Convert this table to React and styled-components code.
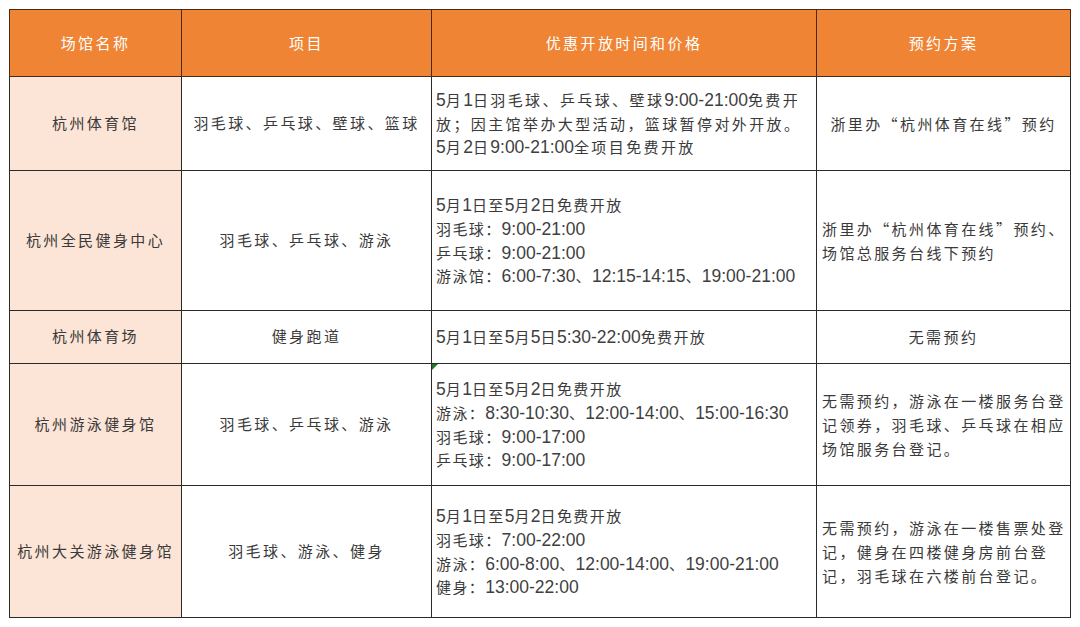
import styled, { createGlobalStyle } from "styled-components";

const COLOR = {
  header: "#EE8434",
  name: "#FCE4D6",
  border: "#2a2a2a",
  text: "#3a3a3a",
};

const GlobalStyle = createGlobalStyle`
  html, body {
    margin: 0;
    padding: 0;
    background: #fff;
  }
  body {
    font-family: "Noto Sans CJK SC", "Noto Sans", sans-serif;
  }
`;

const ROWS = [
  {
    name: "杭州体育馆",
    items: "羽毛球、乒乓球、壁球、篮球",
    time: [
      ["5月1日羽毛球、乒乓球、壁球", "9:00-21:00", "免费开"],
      ["放；因主馆举办大型活动，篮球暂停对外开放。"],
      ["5月2日", "9:00-21:00", "全项目免费开放"],
    ],
    wide: true,
    plan: ["浙里办“杭州体育在线”预约"],
    planAlign: "center",
    height: 94,
  },
  {
    name: "杭州全民健身中心",
    items: "羽毛球、乒乓球、游泳",
    time: [
      ["5月1日至5月2日免费开放"],
      ["羽毛球：", "9:00-21:00"],
      ["乒乓球：", "9:00-21:00"],
      ["游泳馆：", "6:00-7:30", "、", "12:15-14:15", "、", "19:00-21:00"],
    ],
    plan: ["浙里办“杭州体育在线”预约、", "场馆总服务台线下预约"],
    planAlign: "left",
    height: 140,
  },
  {
    name: "杭州体育场",
    items: "健身跑道",
    time: [["5月1日至5月5日", "5:30-22:00", "免费开放"]],
    plan: ["无需预约"],
    planAlign: "center",
    height: 53,
  },
  {
    name: "杭州游泳健身馆",
    items: "羽毛球、乒乓球、游泳",
    time: [
      ["5月1日至5月2日免费开放"],
      ["游泳：", "8:30-10:30", "、", "12:00-14:00", "、", "15:00-16:30"],
      ["羽毛球：", "9:00-17:00"],
      ["乒乓球：", "9:00-17:00"],
    ],
    plan: ["无需预约，游泳在一楼服务台登", "记领券，羽毛球、乒乓球在相应", "场馆服务台登记。"],
    planAlign: "left",
    height: 122,
    marked: true,
  },
  {
    name: "杭州大关游泳健身馆",
    items: "羽毛球、游泳、健身",
    time: [
      ["5月1日至5月2日免费开放"],
      ["羽毛球：", "7:00-22:00"],
      ["游泳：", "6:00-8:00", "、", "12:00-14:00", "、", "19:00-21:00"],
      ["健身：", "13:00-22:00"],
    ],
    plan: ["无需预约，游泳在一楼售票处登", "记，健身在四楼健身房前台登", "记，羽毛球在六楼前台登记。"],
    planAlign: "left",
    height: 132,
  },
];

// split a text piece so that runs of digits get the number font
const renderPiece = (piece, key) => {
  const parts = piece.split(/([0-9:\-]+)/).filter(Boolean);
  return parts.map((p, i) =>
    /^[0-9:\-]+$/.test(p) ? (
      <Num key={`${key}-${i}`}>{p}</Num>
    ) : (
      <span key={`${key}-${i}`}>{p}</span>
    )
  );
};

const App = () => {
  return (
    <Page>
      <GlobalStyle />
      <Table>
        <colgroup>
          <col style={{ width: 172 }} />
          <col style={{ width: 250 }} />
          <col style={{ width: 385 }} />
          <col style={{ width: 254 }} />
        </colgroup>
        <thead>
          <HeadRow>
            <HeadCell>场馆名称</HeadCell>
            <HeadCell>项目</HeadCell>
            <HeadCell>优惠开放时间和价格</HeadCell>
            <HeadCell>预约方案</HeadCell>
          </HeadRow>
        </thead>
        <tbody>
          {ROWS.map((row) => (
            <BodyRow key={row.name} height={row.height}>
              <NameCell>{row.name}</NameCell>
              <ItemCell>{row.items}</ItemCell>
              <TimeCell marked={row.marked} wide={row.wide}>
                {row.time.map((line, li) => (
                  <Line key={li}>{line.map((piece, pi) => renderPiece(piece, `${li}-${pi}`))}</Line>
                ))}
              </TimeCell>
              <PlanCell align={row.planAlign}>
                {row.plan.map((line) => (
                  <PlanLine key={line}>{line}</PlanLine>
                ))}
              </PlanCell>
            </BodyRow>
          ))}
        </tbody>
      </Table>
    </Page>
  );
};

const Page = styled.div`
  padding: 9px 0 0 9px;
  width: 1080px;
  height: 627px;
  box-sizing: border-box;
  overflow: hidden;
`;

const Table = styled.table`
  border-collapse: collapse;
  table-layout: fixed;
  width: 1062px;
  color: ${COLOR.text};
  font-size: 15px;
  letter-spacing: 2.4px;
`;

const HeadRow = styled.tr`
  height: 67px;
`;

const HeadCell = styled.th`
  background: ${COLOR.header};
  color: #fff;
  font-weight: 400;
  text-align: center;
  vertical-align: middle;
  border: 1.5px solid #4a2a14;
  padding: 0 0 2px;
`;

const BodyRow = styled.tr`
  height: ${({ height }) => height}px;
`;

const Cell = styled.td`
  border: 1.5px solid ${COLOR.border};
  vertical-align: middle;
  padding: 0;
  white-space: nowrap;
`;

const NameCell = styled(Cell)`
  background: ${COLOR.name};
  text-align: center;
  padding-bottom: 3px;
`;

const ItemCell = styled(Cell)`
  text-align: center;
  padding-bottom: 3px;
`;

const TimeCell = styled(Cell)`
  position: relative;
  text-align: left;
  padding-left: 4px;
  letter-spacing: ${({ wide }) => (wide ? "2.4px" : "1.4px")};

  &::before {
    content: "";
    display: ${({ marked }) => (marked ? "block" : "none")};
    position: absolute;
    top: 0;
    left: 0;
    width: 0;
    height: 0;
    border-top: 6px solid #1f7a1f;
    border-right: 6px solid transparent;
  }
`;

const Line = styled.div`
  height: 23.8px;
  line-height: 23.8px;
`;

const Num = styled.span`
  font-family: "Liberation Sans", Arial, sans-serif;
  font-size: 17.5px;
  letter-spacing: 0;
  color: #3f3f3f;
`;

const PlanCell = styled(Cell)`
  text-align: ${({ align }) => align};
  padding-left: ${({ align }) => (align === "left" ? "5px" : "0")};
`;

const PlanLine = styled.div`
  line-height: 24px;
`;

export default App;
